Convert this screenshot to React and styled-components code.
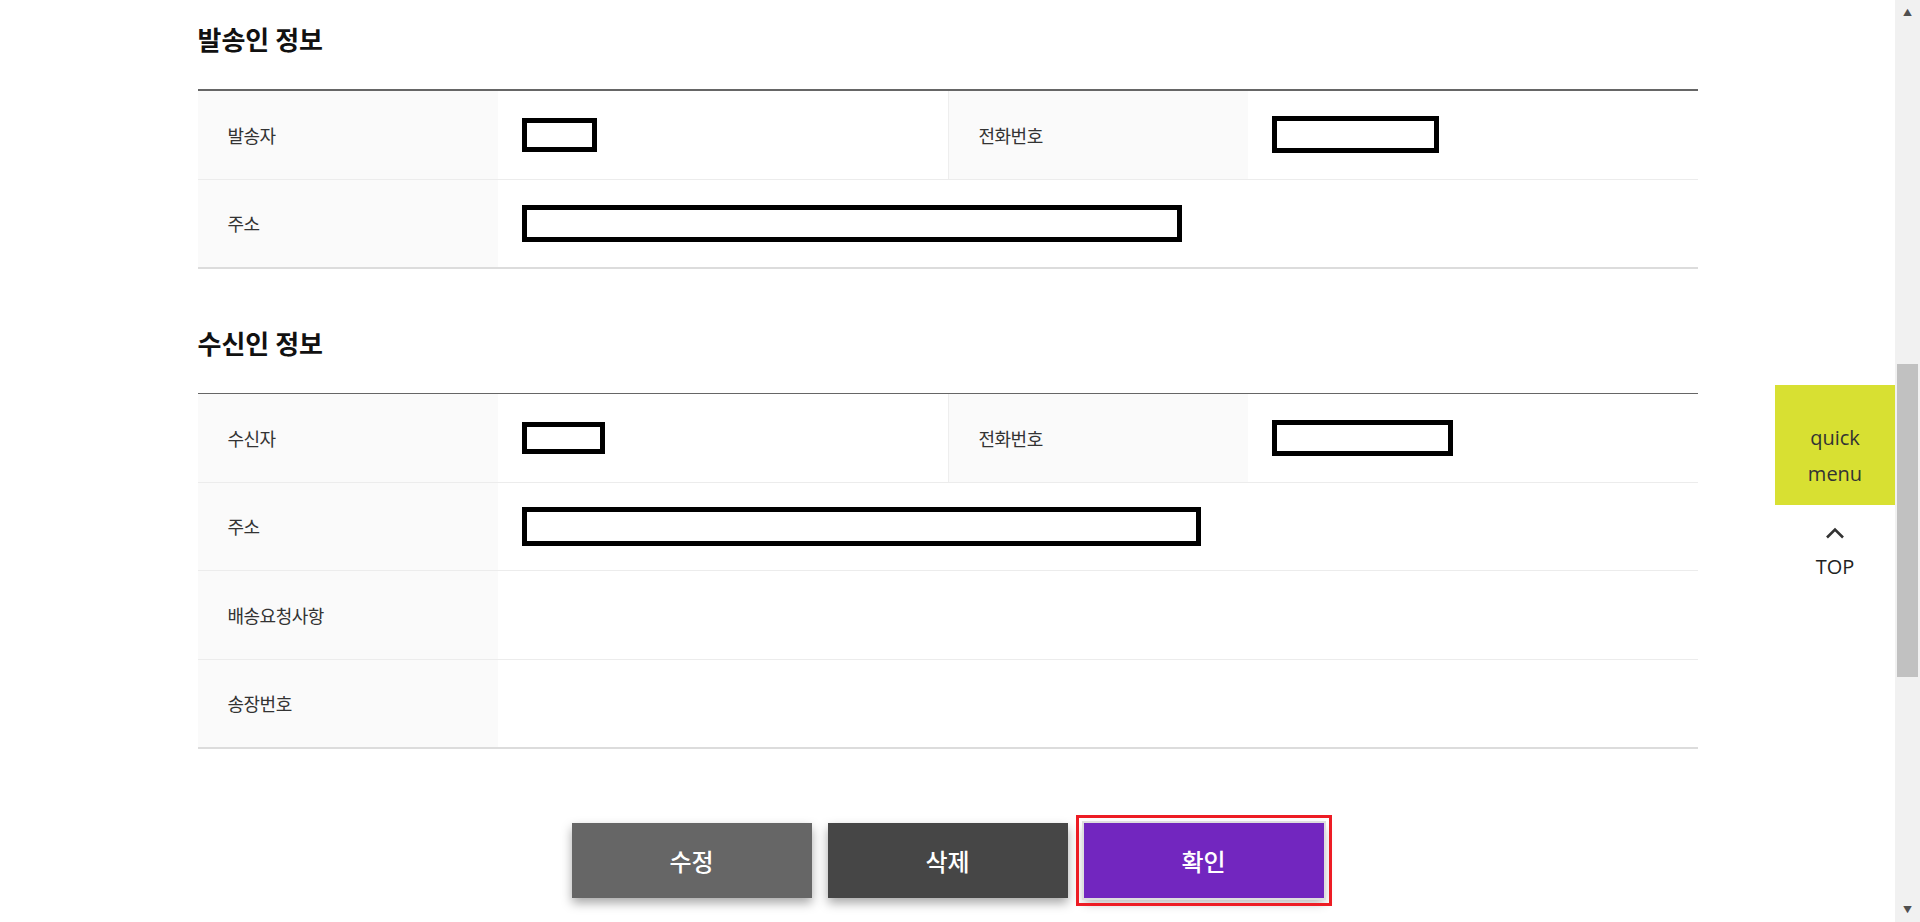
import React from "react";
import styled, { createGlobalStyle } from "styled-components";

const GlobalStyle = createGlobalStyle`
  html, body {
    margin: 0;
    padding: 0;
    height: 100%;
    overflow: hidden;
    background: #fff;
    font-family: "Noto Sans CJK KR", "Noto Sans", sans-serif;
  }
  #root {
    height: 100%;
  }
`;

const Screen = styled.div`
  display: flex;
  height: 100vh;
`;

const Page = styled.main`
  position: relative;
  flex: 1;
  overflow: hidden;
  padding-top: 21px;
`;

const Container = styled.div`
  width: 1500px;
  margin: 0 auto;
`;

const Section = styled.section`
  & + & {
    margin-top: 56px;
  }
`;

const SectionTitle = styled.h3`
  margin: 0 0 32px;
  height: 36px;
  line-height: 36px;
  font-size: 26px;
  font-weight: 700;
  color: #111;
  letter-spacing: 0;
`;

const InfoTable = styled.div`
  border-top: ${(p) => (p.$thin ? "1px" : "2px")} solid #666;
  border-bottom: 2px solid #dcdcdc;
`;

const Row = styled.div`
  display: grid;
  grid-template-columns: ${(p) => (p.$pair ? "300px 450px 300px 450px" : "300px 1fr")};
  height: 87.5px;

  & + & {
    border-top: 1px solid #ececec;
  }
`;

const Label = styled.div`
  display: flex;
  align-items: center;
  padding-left: 30px;
  background: #fafafa;
  font-size: 18px;
  color: #333;
  letter-spacing: -0.5px;
  border-left: ${(p) => (p.$divided ? "1px solid #eee" : "none")};
`;

const Value = styled.div`
  display: flex;
  align-items: center;
  padding-left: 24px;
  font-size: 18px;
  color: #333;
`;

const Redact = styled.span`
  display: block;
  box-sizing: border-box;
  width: ${(p) => p.$w}px;
  height: ${(p) => p.$h}px;
  border: 5px solid #000;
  background: #fff;
`;

const ButtonRow = styled.div`
  display: flex;
  justify-content: center;
  gap: 16px;
  margin-top: 74px;
`;

const colors = {
  edit: "#666666",
  remove: "#464646",
  confirm: "#7226bf",
};

const Button = styled.button`
  width: 240px;
  height: 75px;
  border: none;
  background: ${(p) => colors[p.$variant]};
  color: #fff;
  font-family: inherit;
  font-size: 24px;
  font-weight: 500;
  box-shadow: 0 5px 10px rgba(0, 0, 0, 0.35);
  cursor: pointer;

  ${(p) =>
    p.$variant === "confirm" &&
    `
    box-shadow: 0 0 0 2px #dedede, 0 5px 10px rgba(0, 0, 0, 0.3);
    outline: 3px solid #ed1c24;
    outline-offset: 5px;
  `}
`;

const QuickMenu = styled.aside`
  position: absolute;
  top: 385px;
  right: 0;
  width: 120px;
  display: flex;
  flex-direction: column;
  align-items: center;
  font-family: "Open Sans", "Noto Sans", sans-serif;
`;

const QuickBox = styled.a`
  width: 120px;
  height: 120px;
  box-sizing: border-box;
  padding-top: 22px;
  display: flex;
  flex-direction: column;
  align-items: center;
  justify-content: center;
  background: #d8e032;
  color: #333;
  font-size: 20px;
  line-height: 36px;
  text-decoration: none;
`;

const TopButton = styled.a`
  margin-top: 22px;
  display: flex;
  flex-direction: column;
  align-items: center;
  gap: 18px;
  color: #222;
  font-size: 20px;
  line-height: 20px;
  text-decoration: none;
`;

const Scrollbar = styled.div`
  width: 25px;
  display: flex;
  flex-direction: column;
  background: #f1f1f1;
`;

const ScrollArrow = styled.div`
  height: 25px;
  display: flex;
  align-items: center;
  justify-content: center;
  color: #505050;
  font-size: 9px;
`;

const ScrollTrack = styled.div`
  flex: 1;
  display: flex;
  justify-content: center;
`;

const Thumb = styled.div`
  width: 21px;
  height: 313px;
  margin-top: 339px;
  background: #c1c1c1;
`;

const Chevron = () => (
  <svg width="20" height="12" viewBox="0 0 20 12" fill="none">
    <path d="M2 10.5L10 2.5L18 10.5" stroke="#333" strokeWidth="2.6" />
  </svg>
);

const sender = [
  { label: "발송자", w: 75, h: 34, phone: { w: 167, h: 37 } },
];

const App = () => (
  <>
    <GlobalStyle />
    <Screen>
      <Page>
        <Container>
          <Section>
            <SectionTitle>발송인 정보</SectionTitle>
            <InfoTable>
              {sender.map((item) => (
                <Row $pair key={item.label}>
                  <Label>{item.label}</Label>
                  <Value>
                    <Redact $w={item.w} $h={item.h} />
                  </Value>
                  <Label $divided>전화번호</Label>
                  <Value>
                    <Redact $w={item.phone.w} $h={item.phone.h} />
                  </Value>
                </Row>
              ))}
              <Row>
                <Label>주소</Label>
                <Value>
                  <Redact $w={660} $h={37} />
                </Value>
              </Row>
            </InfoTable>
          </Section>

          <Section>
            <SectionTitle>수신인 정보</SectionTitle>
            <InfoTable $thin>
              <Row $pair>
                <Label>수신자</Label>
                <Value>
                  <Redact $w={83} $h={32} />
                </Value>
                <Label $divided>전화번호</Label>
                <Value>
                  <Redact $w={181} $h={36} />
                </Value>
              </Row>
              <Row>
                <Label>주소</Label>
                <Value>
                  <Redact $w={679} $h={39} />
                </Value>
              </Row>
              <Row>
                <Label>배송요청사항</Label>
                <Value />
              </Row>
              <Row>
                <Label>송장번호</Label>
                <Value />
              </Row>
            </InfoTable>
          </Section>

          <ButtonRow>
            <Button $variant="edit">수정</Button>
            <Button $variant="remove">삭제</Button>
            <Button $variant="confirm">확인</Button>
          </ButtonRow>
        </Container>

        <QuickMenu>
          <QuickBox href="#quick">
            <span>quick</span>
            <span>menu</span>
          </QuickBox>
          <TopButton href="#top">
            <Chevron />
            TOP
          </TopButton>
        </QuickMenu>
      </Page>

      <Scrollbar>
        <ScrollArrow>▲</ScrollArrow>
        <ScrollTrack>
          <Thumb />
        </ScrollTrack>
        <ScrollArrow>▼</ScrollArrow>
      </Scrollbar>
    </Screen>
  </>
);

export default App;
